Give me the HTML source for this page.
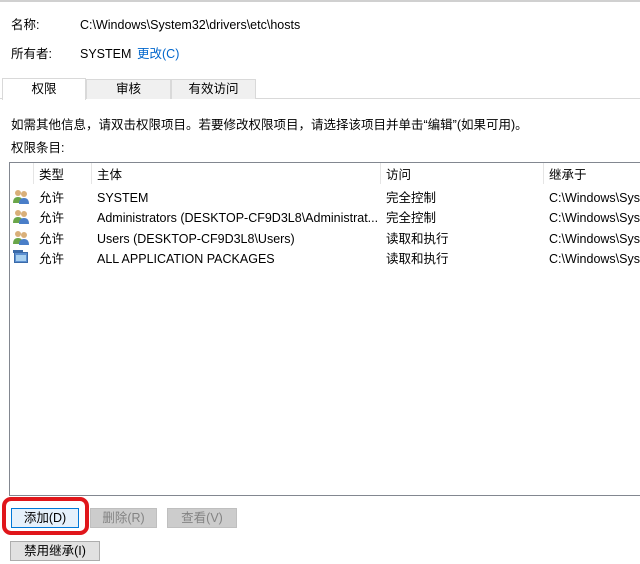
<!DOCTYPE html>
<html><head><meta charset="utf-8"><style>
*{margin:0;padding:0;box-sizing:border-box}
html,body{overflow:hidden}
body{width:640px;height:564px;background:#fff;font-family:"Liberation Sans","Noto Sans CJK SC",sans-serif;font-size:12.5px;color:#000;position:relative}
.a{position:absolute;white-space:nowrap;line-height:16px}
.c{overflow:hidden}
.tab{position:absolute;top:79px;height:20px;background:#f0f0f0;border:1px solid #d9d9d9;border-bottom:none;text-align:center;line-height:19px;font-size:12.5px}
.col{position:absolute;top:163px;height:21px;border-left:1px solid #e5e5e5}
.btn{position:absolute;height:20px;border:1px solid #adadad;background:#e1e1e1;text-align:center;line-height:18px;font-size:12.5px}
</style></head><body>
<div class="a" style="left:0;top:0;width:640px;height:2px;background:#d0d0d0"></div>
<div class="a" style="left:11px;top:17px">名称:</div>
<div class="a" style="left:80px;top:17px">C:\Windows\System32\drivers\etc\hosts</div>
<div class="a" style="left:11px;top:46px">所有者:</div>
<div class="a" style="left:80px;top:46px">SYSTEM</div>
<div class="a" style="left:137px;top:46px;color:#0066cc">更改(C)</div>
<div class="a" style="left:0;top:98px;width:640px;height:1px;background:#d9d9d9"></div>
<div class="tab" style="left:86px;width:85px">审核</div>
<div class="tab" style="left:171px;width:85px">有效访问</div>
<div class="tab" style="left:2px;top:78px;height:22px;width:84px;background:#fff;line-height:21px">权限</div>
<div class="a" style="left:11px;top:117px">如需其他信息，请双击权限项目。若要修改权限项目，请选择该项目并单击“编辑”(如果可用)。</div>
<div class="a" style="left:11px;top:140px">权限条目:</div>
<div class="a" style="left:9px;top:162px;width:631px;height:334px;border:1px solid #828790;border-right:none"></div>
<div class="col" style="left:33px"></div><div class="col" style="left:91px"></div><div class="col" style="left:380px"></div><div class="col" style="left:543px"></div>
<div class="a" style="left:39px;top:167px">类型</div>
<div class="a" style="left:97px;top:167px">主体</div>
<div class="a" style="left:386px;top:167px">访问</div>
<div class="a" style="left:549px;top:167px">继承于</div>
<svg class="a" style="left:13px;top:189px" width="16" height="76">
<g id="u"><circle cx="5" cy="4" r="3" fill="#d9b07a"/><path d="M0 14 Q0 8 5 8 Q10 8 10 14Z" fill="#6aa64a"/><circle cx="11" cy="5" r="3" fill="#d9b07a"/><path d="M6 15 Q6 9 11 9 Q16 9 16 15Z" fill="#4a7ec8"/></g>
<use href="#u" y="20"/><use href="#u" y="41"/>
<rect x="1.5" y="63.5" width="13" height="10" fill="#5b8fd0" stroke="#3a6aa8"/><rect x="3" y="66" width="10" height="6" fill="#a8d0f0"/><rect x="0" y="61" width="10" height="3" fill="#3a6aa8"/>
</svg>
<div class="a" style="left:39px;top:190px">允许</div><div class="a c" style="left:97px;top:190px;width:280px">SYSTEM</div><div class="a" style="left:386px;top:190px">完全控制</div><div class="a c" style="left:549px;top:190px;width:91px">C:\Windows\System32</div>
<div class="a" style="left:39px;top:210px">允许</div><div class="a c" style="left:97px;top:210px;width:281px">Administrators (DESKTOP-CF9D3L8\Administrat...</div><div class="a" style="left:386px;top:210px">完全控制</div><div class="a c" style="left:549px;top:210px;width:91px">C:\Windows\System32</div>
<div class="a" style="left:39px;top:231px">允许</div><div class="a c" style="left:97px;top:231px;width:280px">Users (DESKTOP-CF9D3L8\Users)</div><div class="a" style="left:386px;top:231px">读取和执行</div><div class="a c" style="left:549px;top:231px;width:91px">C:\Windows\System32</div>
<div class="a" style="left:39px;top:251px">允许</div><div class="a c" style="left:97px;top:251px;width:280px">ALL APPLICATION PACKAGES</div><div class="a" style="left:386px;top:251px">读取和执行</div><div class="a c" style="left:549px;top:251px;width:91px">C:\Windows\System32</div>
<div class="btn" style="left:11px;top:508px;width:68px;background:#e5f1fb;border-color:#0078d7">添加(D)</div>
<div class="btn" style="left:90px;top:508px;width:67px;background:#cccccc;border-color:#bfbfbf;color:#838383">删除(R)</div>
<div class="btn" style="left:167px;top:508px;width:70px;background:#cccccc;border-color:#bfbfbf;color:#838383">查看(V)</div>
<div class="a" style="left:2px;top:497px;width:87px;height:38px;border:4px solid #e0161b;border-radius:9px"></div>
<div class="btn" style="left:10px;top:541px;width:90px">禁用继承(I)</div>
</body></html>
